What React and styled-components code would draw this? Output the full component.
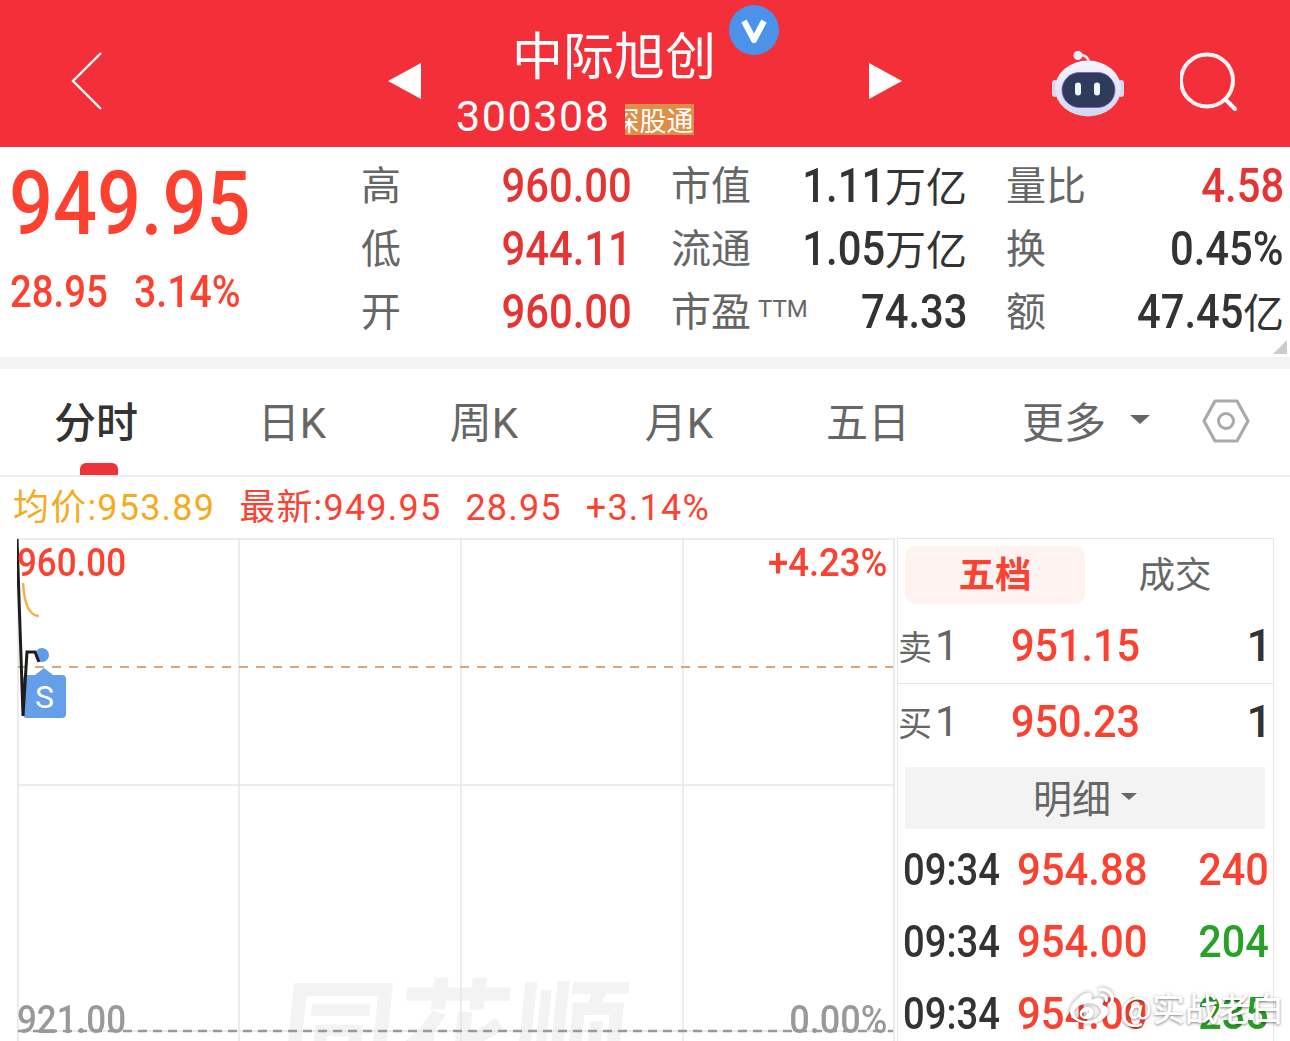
import React from "react";
import styled, { createGlobalStyle } from "styled-components";
import { FaWeibo } from "react-icons/fa";

const CJK = '"Noto Sans CJK SC", sans-serif';
const NUM = `Roboto, ${CJK}`;
const RED = "#fc4131";
const DEEP_RED = "#e63434";

const GlobalStyle = createGlobalStyle`
  html, body { margin: 0; padding: 0; background: #fff; }
  body { width: 1290px; height: 1041px; overflow: hidden; font-family: Roboto, ${CJK}; }
  * { box-sizing: border-box; }
`;

const Page = styled.div`
  position: relative;
  width: 1290px;
  height: 1041px;
  overflow: hidden;
  display: flex;
  flex-direction: column;
`;

// the app's number face is narrower than Roboto, so digits get squeezed
const Num = styled.span`
  display: inline-block;
  white-space: nowrap;
  transform: scaleX(${(p) => p.$sx || 0.87});
  transform-origin: ${(p) => (p.$end ? "right" : "left")} center;
`;

/* red header */
const Header = styled.header`
  height: 147px;
  flex: none;
  background: #f33039;
  display: grid;
  grid-template-columns: 388px 33px 448px 33px 150px 72px 56px 57px;
  align-items: center;
  color: #fff;
  padding-top: 14px;
`;

const HeaderIcon = styled.svg`
  display: block;
`;

const BackIcon = styled(HeaderIcon)`
  margin-left: 70px;
`;

const TitleBlock = styled.div`
  position: relative;
  align-self: start;
  margin-top: -14px;
  display: flex;
  flex-direction: column;
  align-items: flex-start;
`;

const Title = styled.div`
  font-family: ${CJK};
  font-size: 51px;
  line-height: 62px;
  margin: 22px 0 0 91px;
`;

const CodeRow = styled.div`
  display: flex;
  align-items: center;
  height: 40px;
  margin: 12px 0 0 35px;
`;

const Code = styled.span`
  font-family: Roboto, sans-serif;
  font-size: 43px;
  letter-spacing: 1.6px;
  line-height: 40px;
`;

const Badge = styled.span`
  margin-left: 14px;
  width: 69px;
  height: 31px;
  margin-top: 7px;
  background: #dd8f47;
  overflow: hidden;
  display: flex;
  justify-content: flex-end;
  align-items: center;
  font-family: ${CJK};
  font-size: 27px;
  white-space: nowrap;
  color: #fff;
`;

const VerifiedBadge = styled.svg`
  position: absolute;
  left: 308px;
  top: 5px;
`;

/* quote panel */
const Quote = styled.section`
  position: relative;
  height: 210px;
  flex: none;
  display: flex;
  font-family: ${NUM};
`;

const PriceColumn = styled.div`
  width: 362px;
  flex: none;
  padding: 10px 0 0 9px;
  color: ${RED};
`;

const BigPrice = styled.div`
  font-size: 89px;
  line-height: 94px;
  font-weight: 500;
`;

const ChangeRow = styled.div`
  display: flex;
  gap: 12px;
  font-size: 44px;
  font-weight: 500;
  line-height: 46px;
  margin-top: 18px;
  padding-left: 1px;
`;

const StatColumn = styled.div`
  width: ${(p) => p.$width}px;
  margin-right: 42px;
  flex: none;
  padding-top: 7px;
`;

const StatRow = styled.div`
  height: 63px;
  margin: 0 -2px 0 -1px;
  display: flex;
  align-items: center;
  justify-content: space-between;
`;

const StatLabel = styled.span`
  font-family: ${CJK};
  font-size: 40px;
  line-height: 50px;
  margin-bottom: 6px;
  color: #666;
  white-space: nowrap;
`;

const Ttm = styled.span`
  font-family: Roboto, sans-serif;
  font-size: 24px;
  margin-left: 7px;
  vertical-align: 9px;
`;

const StatValue = styled.span`
  display: flex;
  align-items: center;
  font-size: 48px;
  font-weight: 500;
  white-space: nowrap;
  color: ${(p) => (p.$up ? DEEP_RED : "#333")};
`;

const ValueUnit = styled.span`
  font-family: ${CJK};
  font-size: 41px;
  font-weight: 400;
  line-height: 50px;
  margin-bottom: 4px;
`;

const CornerMark = styled.div`
  position: absolute;
  right: 3px;
  bottom: 3px;
  width: 0;
  height: 0;
  border-style: solid;
  border-width: 0 0 14px 14px;
  border-color: transparent transparent #ccc transparent;
`;

const Divider = styled.div`
  height: 12px;
  flex: none;
  background: #f3f3f3;
`;

/* period tabs */
const Tabs = styled.nav`
  height: 108px;
  flex: none;
  display: grid;
  grid-template-columns: 192px 200px 184px 206px 172px 220px 104px;
  border-bottom: 2px solid #eee;
`;

const Tab = styled.div`
  position: relative;
  display: flex;
  align-items: center;
  justify-content: center;
  gap: 24px;
  font-family: Roboto, ${CJK};
  font-size: 42px;
  padding-bottom: 5px;
  padding-left: ${(p) => p.$shift || 0}px;
  color: ${(p) => (p.$active ? "#333" : "#666")};
  font-weight: ${(p) => (p.$active ? 500 : 400)};
`;

const TabMark = styled.i`
  position: absolute;
  left: 80px;
  bottom: 0;
  width: 38px;
  height: 12px;
  background: #ee3338;
  border-radius: 6px 6px 0 0;
`;

const Caret = styled.i`
  flex: none;
  width: 0;
  height: 0;
  border-style: solid;
  border-width: ${(p) => p.$size * 0.9}px ${(p) => p.$size}px 0;
  border-color: #666 transparent transparent;
`;

const SettingsIcon = styled.svg`
  margin-top: 2px;
`;

/* average / last line */
const InfoLine = styled.div`
  height: 61px;
  flex: none;
  display: flex;
  align-items: baseline;
  gap: 24px;
  padding: 5px 0 0 13px;
  font-family: Roboto, ${CJK};
  font-size: 36px;
  line-height: 52px;
  letter-spacing: 1.2px;
  color: ${RED};
`;

const AvgText = styled.span`
  color: #f5ab1e;
`;

/* chart + order book */
const Body = styled.div`
  flex: 1;
  min-height: 0;
  display: flex;
  padding-left: 17px;
`;

const Chart = styled.div`
  position: relative;
  width: 878px;
  flex: none;
  font-family: ${NUM};
  font-size: 38px;
  font-weight: 500;
  overflow: hidden;
`;

const ChartLines = styled.svg`
  position: absolute;
  left: 0;
  top: 0;
`;

const Watermark = styled.div`
  position: absolute;
  left: 264px;
  top: 407px;
  font-family: ${CJK};
  font-size: 116px;
  font-weight: 700;
  line-height: 160px;
  color: #f3f3f3;
  white-space: nowrap;
  transform: skewX(-6deg);
`;

const AxisLabel = styled.span`
  position: absolute;
  line-height: 44px;
  ${(p) => (p.$right ? "right: 8px;" : "left: 0;")}
  top: ${(p) => (p.$bottom ? 460 : 3)}px;
  color: ${(p) => (p.$bottom ? "#999" : RED)};
`;

const BuyPoint = styled.span`
  position: absolute;
  left: 6px;
  top: 137px;
  width: 43px;
  height: 43px;
  display: flex;
  align-items: center;
  justify-content: center;
  font-family: Roboto, sans-serif;
  font-size: 32px;
  font-weight: 400;
  color: #fff;
`;

const Book = styled.aside`
  width: 377px;
  margin-left: 2px;
  flex: none;
  border: solid #e5e5e5;
  border-width: 0 1px;
  box-shadow: inset 0 1px 0 #e5e5e5;
  padding-top: 8px;
  overflow: hidden;
  font-family: ${NUM};
`;

const BookTabs = styled.div`
  display: grid;
  grid-template-columns: 180px 180px;
  margin-left: 7px;
  height: 55px;
  margin-bottom: 1px;
`;

const BookTab = styled.div`
  display: flex;
  align-items: center;
  justify-content: center;
  font-family: ${CJK};
  font-size: 36.5px;
  padding-bottom: 5px;
  border-radius: 10px;
  font-weight: ${(p) => (p.$active ? 700 : 400)};
  color: ${(p) => (p.$active ? RED : "#666")};
  background: ${(p) => (p.$active ? "#fff3f2" : "transparent")};
`;

const Level = styled.div`
  height: ${(p) => p.$h}px;
  display: grid;
  grid-template-columns: 113px 1fr auto;
  align-items: center;
  padding: ${(p) => (p.$line ? "6px 1px 0 0" : "0 1px 2px 0")};
  font-size: 45px;
  font-weight: 500;
  border-bottom: ${(p) => (p.$line ? "1px solid #e5e5e5" : "none")};
`;

const LevelLabel = styled.span`
  display: flex;
  align-items: center;
  font-family: Roboto, ${CJK};
  font-size: 34px;
  font-weight: 400;
  color: #666;
`;

const LevelIndex = styled.span`
  font-size: 42px;
  margin-left: 3px;
`;

const LevelPrice = styled.span`
  color: ${RED};
`;

const LevelVolume = styled.span`
  color: #333;
`;

const DetailBar = styled.div`
  height: 62px;
  margin: 7px 8px 0 7px;
  padding-bottom: 4px;
  background: #f3f3f3;
  display: flex;
  align-items: center;
  justify-content: center;
  gap: 10px;
  font-family: ${CJK};
  font-size: 39px;
  color: #666;
`;

const Ticks = styled.div`
  padding-top: 4px;
`;

const Tick = styled.div`
  height: 72px;
  display: grid;
  grid-template-columns: 114px 1fr auto;
  align-items: center;
  padding: 0 4px 0 5px;
  font-size: 45px;
  font-weight: 500;
`;

const TickTime = styled.span`
  color: #333;
`;

const TickPrice = styled.span`
  color: ${RED};
`;

const TickVolume = styled.span`
  color: ${(p) => (p.$down ? "#27a127" : RED)};
`;

/* weibo stamp laid over the screenshot */
const Stamp = styled.div`
  position: absolute;
  right: 6px;
  top: 983px;
  display: flex;
  align-items: center;
  gap: 3px;
  color: #fff;
  font-family: ${CJK};
  font-size: 33px;
  font-weight: 500;
  text-shadow: 0 1px 3px rgba(0, 0, 0, 0.5);
`;

const StampLogo = styled(FaWeibo)`
  width: 50px;
  height: 44px;
  filter: drop-shadow(0 0 2px rgba(0, 0, 0, 0.4));
`;

const stats = [
  {
    width: 268,
    rows: [
      ["高", "960.00", true],
      ["低", "944.11", true],
      ["开", "960.00", true],
    ],
  },
  {
    width: 293,
    rows: [
      ["市值", "1.11", false, "万亿"],
      ["流通", "1.05", false, "万亿"],
      ["市盈", "74.33", false, null, "TTM"],
    ],
  },
  {
    width: 275,
    rows: [
      ["量比", "4.58", true],
      ["换", "0.45%", false],
      ["额", "47.45", false, "亿"],
    ],
  },
];

const ticks = [
  ["09:34", "954.88", "240", false],
  ["09:34", "954.00", "204", true],
  ["09:34", "954.00", "235", true],
];

const Robot = () => (
  <HeaderIcon width="72" height="72" viewBox="0 0 72 72">
    <defs>
      <linearGradient id="robotHead" x1="0" y1="0" x2="0" y2="1">
        <stop offset="0" stopColor="#f6f6fc" />
        <stop offset="1" stopColor="#d3d7f0" />
      </linearGradient>
    </defs>
    <path d="M26 10 q8 -1 11 6" fill="none" stroke="#eeeef8" strokeWidth="2.5" />
    <circle cx="26" cy="10.5" r="4.5" fill="#eeeef8" />
    <rect x="0" y="35" width="6" height="17" rx="3" fill="#d6d8f0" />
    <rect x="66" y="35" width="6" height="17" rx="3" fill="#d6d8f0" />
    <ellipse cx="36" cy="43.5" rx="33" ry="28" fill="url(#robotHead)" />
    <rect x="10" y="27.5" width="53" height="35" rx="17.5" fill="#2e3b5a" stroke="#7a55d8" strokeWidth="0.8" />
    <rect x="23" y="37.5" width="6" height="13" rx="3" fill="#eef6fa" />
    <rect x="42" y="37.5" width="6" height="13" rx="3" fill="#eef6fa" />
  </HeaderIcon>
);

const App = () => (
  <Page>
    <GlobalStyle />
    <Header>
      <BackIcon width="34" height="60" viewBox="0 0 34 60">
        <path d="M31 2 L3 30 L31 58" fill="none" stroke="#fff" strokeWidth="2.4" />
      </BackIcon>
      <HeaderIcon width="33" height="36" viewBox="0 0 33 36">
        <path d="M33 0 V36 L0 18 Z" fill="#fff" />
      </HeaderIcon>
      <TitleBlock>
        <Title>中际旭创</Title>
        <CodeRow>
          <Code>300308</Code>
          <Badge>深股通</Badge>
        </CodeRow>
        <VerifiedBadge width="50" height="50" viewBox="0 0 50 50">
          <circle cx="25" cy="25" r="25" fill="#4b93e9" />
          <path d="M15 16 L25 35 L35 16" fill="none" stroke="#fff" strokeWidth="6" strokeLinejoin="round" />
        </VerifiedBadge>
      </TitleBlock>
      <HeaderIcon width="33" height="36" viewBox="0 0 33 36">
        <path d="M0 0 V36 L33 18 Z" fill="#fff" />
      </HeaderIcon>
      <span />
      <Robot />
      <span />
      <HeaderIcon width="58" height="60" viewBox="0 0 58 60">
        <circle cx="27" cy="29.5" r="26" fill="none" stroke="#fff" strokeWidth="4" opacity="0.95" />
        <path d="M46 49 L55 58" stroke="#fff" strokeWidth="4" strokeLinecap="round" />
      </HeaderIcon>
    </Header>

    <Quote>
      <PriceColumn>
        <BigPrice>
          <Num $sx={0.87}>949.95</Num>
        </BigPrice>
        <ChangeRow>
          <Num $sx={0.87}>28.95</Num>
          <Num $sx={0.89}>3.14%</Num>
        </ChangeRow>
      </PriceColumn>
      {stats.map((col) => (
        <StatColumn key={col.width} $width={col.width}>
          {col.rows.map(([label, value, up, unit, note]) => (
            <StatRow key={label}>
              <StatLabel>
                {label}
                {note && <Ttm>{note}</Ttm>}
              </StatLabel>
              <StatValue $up={up}>
                <Num $end>{value}</Num>
                {unit && <ValueUnit>{unit}</ValueUnit>}
              </StatValue>
            </StatRow>
          ))}
        </StatColumn>
      ))}
      <CornerMark />
    </Quote>
    <Divider />

    <Tabs>
      <Tab $active>
        分时
        <TabMark />
      </Tab>
      <Tab>日K</Tab>
      <Tab>周K</Tab>
      <Tab>月K</Tab>
      <Tab>五日</Tab>
      <Tab $shift={44}>
        更多
        <Caret $size={10} />
      </Tab>
      <Tab>
        <SettingsIcon width="48" height="44" viewBox="0 0 48 44">
          <path d="M13 2 H35 L46 22 L35 42 H13 L2 22 Z" fill="none" stroke="#aaa" strokeWidth="3.2" strokeLinejoin="round" />
          <circle cx="24" cy="22" r="7.5" fill="none" stroke="#aaa" strokeWidth="3" />
        </SettingsIcon>
      </Tab>
    </Tabs>

    <InfoLine>
      <AvgText>均价:953.89</AvgText>
      <span>最新:949.95</span>
      <span>28.95</span>
      <span>+3.14%</span>
    </InfoLine>

    <Body>
      <Chart>
        <Watermark>同花顺</Watermark>
        <ChartLines width="878" height="503" viewBox="0 0 878 503">
          <g stroke="#e6e6e6" strokeWidth="1.5" fill="none">
            <path d="M1 0 V503 M222 0 V503 M444 0 V503 M666 0 V503 M877 0 V503" />
            <path d="M0 1 H878 M0 247 H878 M0 493 H878" />
          </g>
          <path d="M1 129 H876" stroke="#d8a878" strokeWidth="2" strokeDasharray="9 8" />
          <path d="M6 45 Q8 78 22 78" fill="none" stroke="#f9b24a" strokeWidth="2.6" />
          <circle cx="25" cy="117" r="7" fill="#5f9bea" />
          <path
            d="M6 141 Q6 137 10 137 H18 L27 130 L36 137 H45 Q49 137 49 141 V176 Q49 180 45 180 H10 Q6 180 6 176 Z"
            fill="#659ee9"
          />
          <path d="M0 1 L6 178 L10 114 H18 L22 124" fill="none" stroke="#1d1d1d" strokeWidth="3" />
          <path d="M1 493 H876" stroke="#999" strokeWidth="2.5" strokeDasharray="9 6" />
        </ChartLines>
        <BuyPoint>S</BuyPoint>
        <AxisLabel>
          <Num $sx={0.92}>960.00</Num>
        </AxisLabel>
        <AxisLabel $right>
          <Num $sx={0.96} $end>+4.23%</Num>
        </AxisLabel>
        <AxisLabel $bottom>
          <Num $sx={0.92}>921.00</Num>
        </AxisLabel>
        <AxisLabel $bottom $right>
          <Num $sx={0.95} $end>0.00%</Num>
        </AxisLabel>
      </Chart>

      <Book>
        <BookTabs>
          <BookTab $active>五档</BookTab>
          <BookTab>成交</BookTab>
        </BookTabs>
        <Level $h={82} $line>
          <LevelLabel>卖<LevelIndex>1</LevelIndex></LevelLabel>
          <LevelPrice><Num $sx={0.92}>951.15</Num></LevelPrice>
          <LevelVolume>1</LevelVolume>
        </Level>
        <Level $h={76}>
          <LevelLabel>买<LevelIndex>1</LevelIndex></LevelLabel>
          <LevelPrice><Num $sx={0.92}>950.23</Num></LevelPrice>
          <LevelVolume>1</LevelVolume>
        </Level>
        <DetailBar>
          明细
          <Caret $size={8} />
        </DetailBar>
        <Ticks>
          {ticks.map(([time, price, volume, down], i) => (
            <Tick key={i}>
              <TickTime><Num $sx={0.85}>{time}</Num></TickTime>
              <TickPrice><Num $sx={0.93}>{price}</Num></TickPrice>
              <TickVolume $down={down}><Num $sx={0.92} $end>{volume}</Num></TickVolume>
            </Tick>
          ))}
        </Ticks>
      </Book>
    </Body>

    <Stamp>
      <StampLogo />
      <span>@实战老白</span>
    </Stamp>
  </Page>
);

export default App;
